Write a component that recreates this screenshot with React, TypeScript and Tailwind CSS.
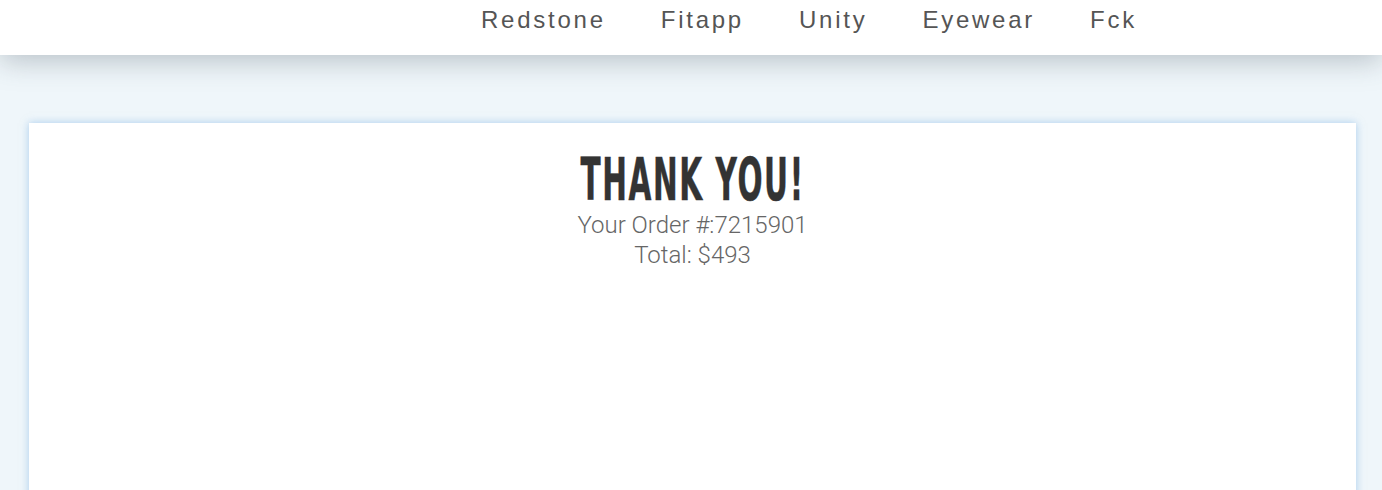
const NAV = ["Redstone", "Fitapp", "Unity", "Eyewear", "Fck"];

export default function App() {
  return (
    <div className="h-[490px] bg-[#eff6fa] overflow-hidden">
      {/* header */}
      <header className="relative z-10 h-[55px] bg-white shadow-[0_6px_28px_rgba(120,130,140,0.45)]">
        <nav className="flex items-start gap-[55px] pl-[481px] pt-[5px]">
          {NAV.map((n) => (
            <a
              key={n}
              className="text-[24px] leading-[30px] tracking-[2.75px] text-[#555] font-['Liberation_Sans',Arial,sans-serif]"
            >
              {n}
            </a>
          ))}
        </nav>
      </header>

      {/* card */}
      <main className="pt-[68px] pl-[29px] pr-[26px]">
        <section className="h-[400px] bg-white shadow-[0_0_8px_rgba(110,170,225,0.55)]">
          <div className="flex flex-col items-center pt-[27px]">
            <h1 className="scale-x-[0.565] text-[58px] leading-[60px] font-bold text-[#333] tracking-[0.05em] [-webkit-text-stroke:0.5px_#333] font-['DejaVu_Sans_Condensed',sans-serif]">
              THANK YOU!
            </h1>
            <p className="text-[24px] leading-[30px] font-light text-[#666] font-['Roboto',sans-serif]">
              Your Order #:7215901
            </p>
            <p className="text-[24px] leading-[30px] font-light text-[#666] font-['Roboto',sans-serif]">
              Total: $493
            </p>
          </div>
        </section>
      </main>
    </div>
  );
}
